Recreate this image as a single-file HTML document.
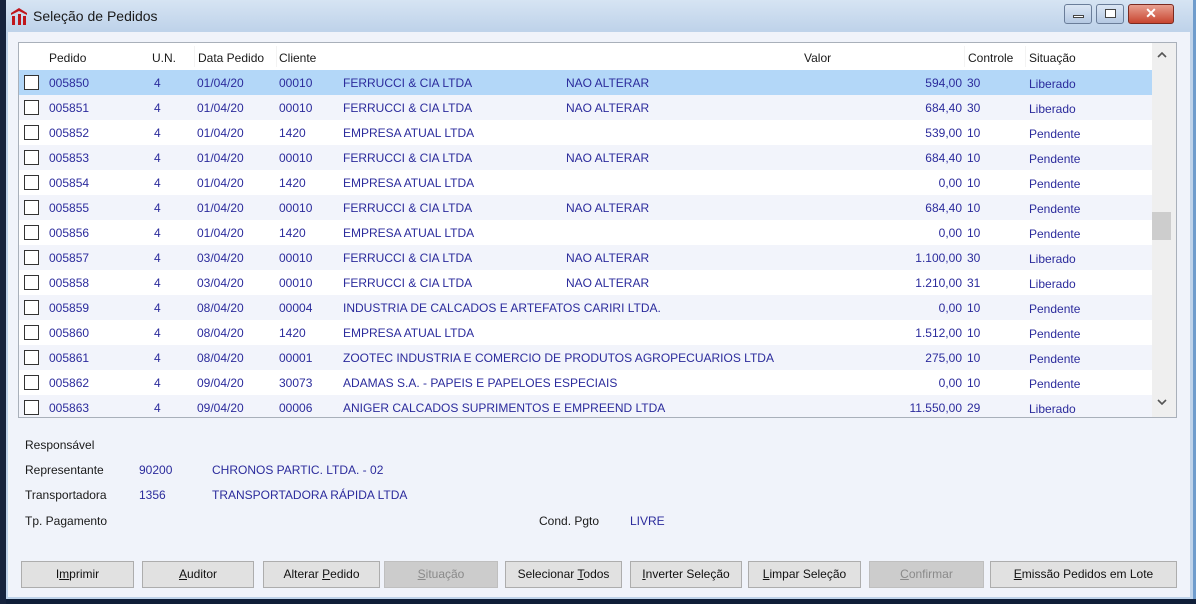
<!DOCTYPE html>
<html><head><meta charset="utf-8">
<style>
*{margin:0;padding:0;box-sizing:border-box}
body{width:1196px;height:604px;overflow:hidden;background:#0f1e38;font-family:"Liberation Sans",sans-serif;font-size:12px;position:relative}
.win{position:absolute;left:0;top:0;width:1196px;height:599px;background:linear-gradient(#d6e4f3,#bfd3ea 30px);border-right:3px solid #6f9ccc}
.leftb{position:absolute;left:0;top:0;width:6px;height:604px;background:#16233d}
.title{position:absolute;left:33px;top:8px;font-size:14px;color:#1a1a1a}
.client{position:absolute;left:8px;top:32px;width:1182px;height:565px;background:#f0f3fa}
.list{position:absolute;left:18px;top:42px;width:1159px;height:376px;background:#fff;border:1px solid #a9b0ba;overflow:hidden}
.t{position:absolute;white-space:nowrap}
.hdr{color:#1a1a1a}
.row{position:absolute;left:0;width:1133px;height:25px}
.d{color:#2b2b9c}
.cb{position:absolute;left:5px;top:5px;width:15px;height:15px;border:1px solid #333;background:#fff}
.sb{position:absolute;left:1133px;top:0;width:24px;height:374px;background:#efefef}
.btn{position:absolute;top:561px;height:27px;background:#e1e1e1;border:1px solid #adadad;text-align:center;line-height:25px;color:#111;font-size:12px}
.btn.dis{background:#cccccc;border-color:#bfbfbf;color:#8a8a8a}
.lbl{position:absolute;color:#1a1a1a}
.val{position:absolute;color:#2b2b9c}
.wb{position:absolute;top:4px;height:20px;border:1px solid #6a7d99;border-radius:3px;background:linear-gradient(#dbe6f4,#b5c9e3)}
</style></head><body>
<div class="win"></div>
<div class="leftb"></div>
<svg style="position:absolute;left:10px;top:7px" width="18" height="18" viewBox="0 0 18 18"><path d="M1 6 L9 1 L17 6 L17 8 L9 4 L1 8Z" fill="#c0161c"/><rect x="2" y="9" width="3" height="9" fill="#c0161c"/><rect x="8" y="7" width="3" height="11" fill="#c0161c"/><rect x="13" y="9" width="3" height="9" fill="#c0161c"/></svg>
<div class="title">Seleção de Pedidos</div>
<div class="wb" style="left:1064px;width:28px"><div style="position:absolute;left:8px;top:10px;width:11px;height:3px;background:#fff;border:1px solid #444"></div></div>
<div class="wb" style="left:1096px;width:28px"><div style="position:absolute;left:8px;top:4px;width:11px;height:9px;background:#fff;border:1px solid #444"></div></div>
<div class="wb" style="left:1128px;width:46px;background:linear-gradient(#e8a090,#c84530);border-color:#7a2a20;color:#fff;text-align:center;font-weight:bold;font-size:14px;line-height:17px">✕</div>
<div class="client"></div>
<div class="list">
<div class="t hdr" style="left:30px;top:8px">Pedido</div>
<div class="t hdr" style="left:133px;top:8px">U.N.</div>
<div class="t hdr" style="left:179px;top:8px">Data Pedido</div>
<div class="t hdr" style="left:260px;top:8px">Cliente</div>
<div class="t hdr" style="left:785px;top:8px">Valor</div>
<div class="t hdr" style="left:949px;top:8px">Controle</div>
<div class="t hdr" style="left:1010px;top:8px">Situação</div>
<div style="position:absolute;left:175px;top:3px;width:1px;height:21px;background:#f3f3f3"></div>
<div style="position:absolute;left:257px;top:3px;width:1px;height:21px;background:#f3f3f3"></div>
<div style="position:absolute;left:945px;top:3px;width:1px;height:21px;background:#f3f3f3"></div>
<div style="position:absolute;left:1006px;top:3px;width:1px;height:21px;background:#f3f3f3"></div>
<div id="rows"></div>
<div class="sb"><div style="position:absolute;left:0;top:169px;width:19px;height:28px;background:#cdcdcd"></div>
<svg style="position:absolute;left:5px;top:9px" width="10" height="6"><path d="M1 5 L5 1 L9 5" stroke="#555" stroke-width="1.6" fill="none"/></svg>
<svg style="position:absolute;left:5px;top:356px" width="10" height="6"><path d="M1 1 L5 5 L9 1" stroke="#555" stroke-width="1.6" fill="none"/></svg></div>
</div>
<script>
var R=[["005850","01/04/20","00010","FERRUCCI &amp; CIA LTDA","NAO ALTERAR","594,00","30","Liberado"],
["005851","01/04/20","00010","FERRUCCI &amp; CIA LTDA","NAO ALTERAR","684,40","30","Liberado"],
["005852","01/04/20","1420","EMPRESA ATUAL LTDA","","539,00","10","Pendente"],
["005853","01/04/20","00010","FERRUCCI &amp; CIA LTDA","NAO ALTERAR","684,40","10","Pendente"],
["005854","01/04/20","1420","EMPRESA ATUAL LTDA","","0,00","10","Pendente"],
["005855","01/04/20","00010","FERRUCCI &amp; CIA LTDA","NAO ALTERAR","684,40","10","Pendente"],
["005856","01/04/20","1420","EMPRESA ATUAL LTDA","","0,00","10","Pendente"],
["005857","03/04/20","00010","FERRUCCI &amp; CIA LTDA","NAO ALTERAR","1.100,00","30","Liberado"],
["005858","03/04/20","00010","FERRUCCI &amp; CIA LTDA","NAO ALTERAR","1.210,00","31","Liberado"],
["005859","08/04/20","00004","INDUSTRIA DE CALCADOS E ARTEFATOS CARIRI LTDA.","","0,00","10","Pendente"],
["005860","08/04/20","1420","EMPRESA ATUAL LTDA","","1.512,00","10","Pendente"],
["005861","08/04/20","00001","ZOOTEC INDUSTRIA E COMERCIO DE PRODUTOS AGROPECUARIOS LTDA","","275,00","10","Pendente"],
["005862","09/04/20","30073","ADAMAS S.A. - PAPEIS E PAPELOES ESPECIAIS","","0,00","10","Pendente"],
["005863","09/04/20","00006","ANIGER CALCADOS SUPRIMENTOS E EMPREEND LTDA","","11.550,00","29","Liberado"]];
var h="";
R.forEach(function(r,i){var bg=i==0?"#b3d7f8":(i%2?"#f2f4fb":"#fff");
h+='<div class="row" style="top:'+(27+i*25)+'px;background:'+bg+'"><div class="cb"></div>'+
'<div class="t d" style="left:30px;top:6px">'+r[0]+'</div>'+
'<div class="t d" style="left:135px;top:6px">4</div>'+
'<div class="t d" style="left:178px;top:6px">'+r[1]+'</div>'+
'<div class="t d" style="left:260px;top:6px">'+r[2]+'</div>'+
'<div class="t d" style="left:324px;top:6px">'+r[3]+'</div>'+
'<div class="t d" style="left:547px;top:6px">'+r[4]+'</div>'+
'<div class="t d" style="right:190px;top:6px">'+r[5]+'</div>'+
'<div class="t d" style="left:948px;top:6px">'+r[6]+'</div>'+
'<div class="t d" style="left:1010px;top:7px">'+r[7]+'</div></div>';});
document.getElementById("rows").innerHTML=h;
</script>
<div class="lbl" style="left:25px;top:438px">Responsável</div>
<div class="lbl" style="left:25px;top:463px">Representante</div>
<div class="val" style="left:139px;top:463px">90200</div>
<div class="val" style="left:212px;top:463px">CHRONOS PARTIC. LTDA. - 02</div>
<div class="lbl" style="left:25px;top:488px">Transportadora</div>
<div class="val" style="left:139px;top:488px">1356</div>
<div class="val" style="left:212px;top:488px">TRANSPORTADORA RÁPIDA LTDA</div>
<div class="lbl" style="left:25px;top:514px">Tp. Pagamento</div>
<div class="lbl" style="left:539px;top:514px">Cond. Pgto</div>
<div class="val" style="left:630px;top:514px">LIVRE</div>
<div class="btn" style="left:21px;width:113px">I<u>m</u>primir</div>
<div class="btn" style="left:142px;width:112px"><u>A</u>uditor</div>
<div class="btn" style="left:263px;width:117px">Alterar <u>P</u>edido</div>
<div class="btn dis" style="left:384px;width:114px"><u>S</u>ituação</div>
<div class="btn" style="left:505px;width:117px">Selecionar <u>T</u>odos</div>
<div class="btn" style="left:630px;width:112px"><u>I</u>nverter Seleção</div>
<div class="btn" style="left:748px;width:113px"><u>L</u>impar Seleção</div>
<div class="btn dis" style="left:869px;width:115px"><u>C</u>onfirmar</div>
<div class="btn" style="left:990px;width:187px"><u>E</u>missão Pedidos em Lote</div>
</body></html>
